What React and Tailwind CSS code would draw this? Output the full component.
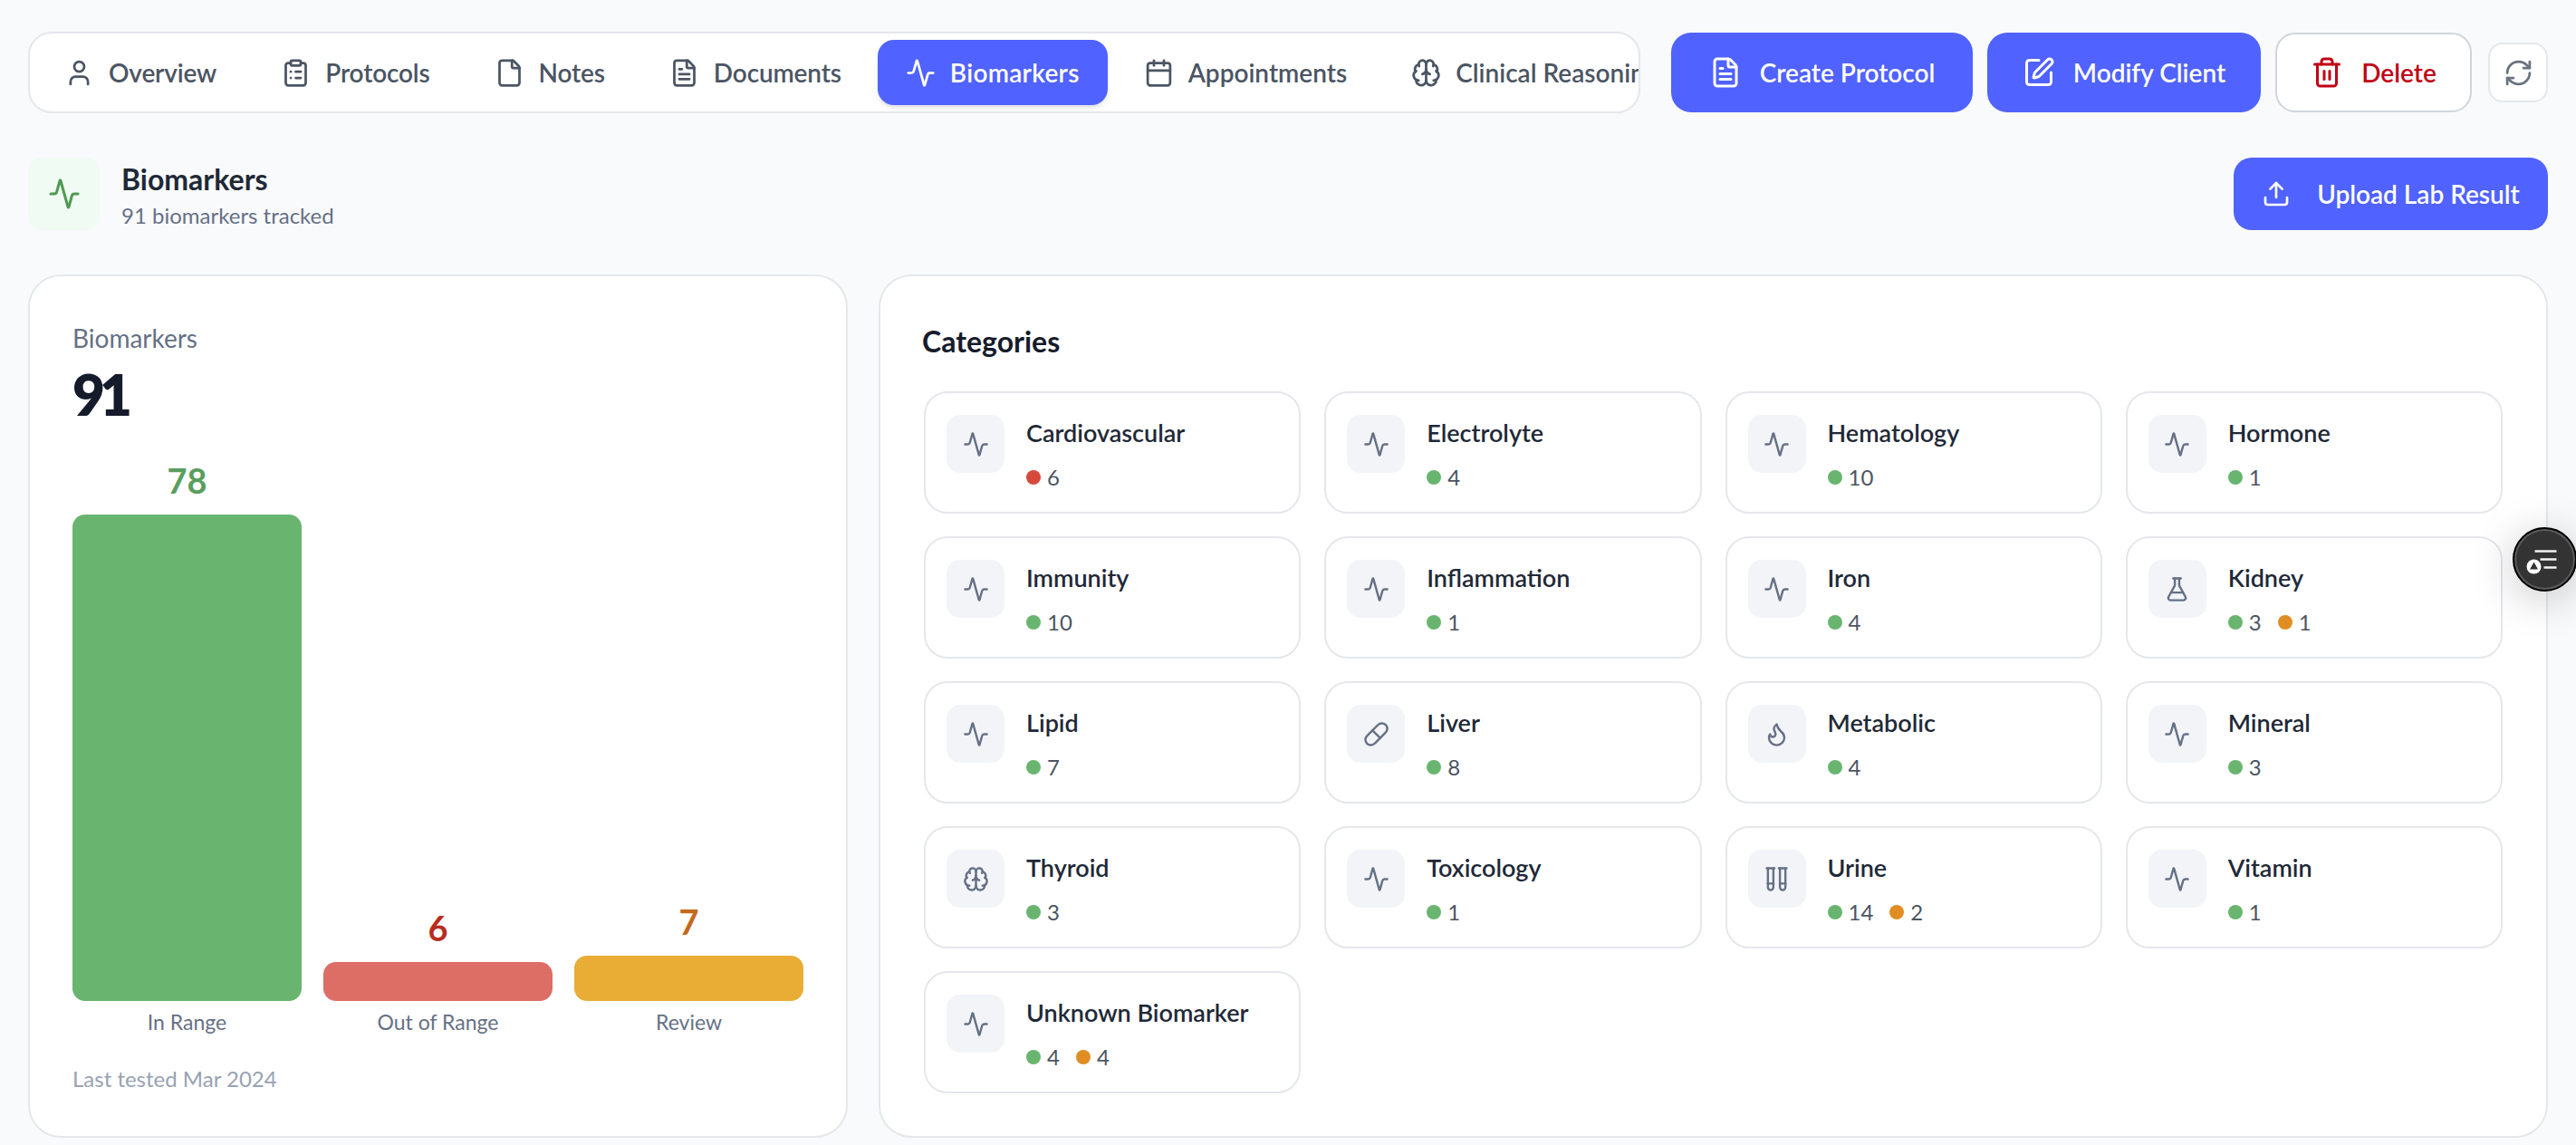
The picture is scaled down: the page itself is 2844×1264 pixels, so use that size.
import {
  Activity,
  Brain,
  Calendar,
  ClipboardList,
  File,
  FileText,
  Flame,
  FlaskConical,
  Pill,
  RefreshCw,
  SquarePen,
  TestTubes,
  Trash2,
  Upload,
  User,
} from "lucide-react";

const tabs = [
  { label: "Overview", icon: User, track: "tracking-[-0.15px]" },
  { label: "Protocols", icon: ClipboardList, track: "tracking-[-0.15px]" },
  { label: "Notes", icon: File, track: "tracking-[-0.15px]" },
  { label: "Documents", icon: FileText, track: "tracking-[-0.15px]" },
  { label: "Biomarkers", icon: Activity, active: true, track: "tracking-[0.3px]" },
  { label: "Appointments", icon: Calendar, track: "" },
  { label: "Clinical Reasoning", icon: Brain, track: "" },
];

const bars = [
  { label: "In Range", value: 78, text: "text-[#5a9e5e]", bar: "bg-[#69b570] h-[537px]" },
  { label: "Out of Range", value: 6, text: "text-[#b92d20]", bar: "bg-[#dc6e66] h-[43px]" },
  { label: "Review", value: 7, text: "text-[#c4691c]", bar: "bg-[#e9ad36] h-[50px]" },
];

const categories = [
  { name: "Cardiovascular", red: 6 },
  { name: "Electrolyte", green: 4 },
  { name: "Hematology", green: 10 },
  { name: "Hormone", green: 1 },
  { name: "Immunity", green: 10 },
  { name: "Inflammation", green: 1 },
  { name: "Iron", green: 4 },
  { name: "Kidney", icon: FlaskConical, green: 3, orange: 1 },
  { name: "Lipid", green: 7 },
  { name: "Liver", icon: Pill, green: 8 },
  { name: "Metabolic", icon: Flame, green: 4 },
  { name: "Mineral", green: 3 },
  { name: "Thyroid", icon: Brain, green: 3 },
  { name: "Toxicology", green: 1 },
  { name: "Urine", icon: TestTubes, green: 14, orange: 2 },
  { name: "Vitamin", green: 1 },
  { name: "Unknown Biomarker", green: 4, orange: 4 },
];

const Count = ({ color, value }) => (
  <span className="flex items-center gap-[7px]">
    <span className={`w-4 h-4 rounded-full ${color}`} />
    <span className="text-[24px] leading-none text-[#4b5563]">{value}</span>
  </span>
);

const CategoryCard = ({ name, icon: Icon = Activity, green, red, orange }) => (
  <div className="h-[135px] bg-white border-2 border-[#e5e7eb] rounded-[26px] pl-[23px] pt-[24px] flex gap-[24px]">
    <div className="w-[64px] h-[64px] bg-[#f3f4f8] rounded-[15px] flex items-center justify-center shrink-0">
      <Icon size={29} strokeWidth={2} className="text-[#667085]" />
    </div>
    <div className="flex flex-col mt-[1px]">
      <div className="text-[27px] leading-[38px] font-semibold text-[#1f2937]">{name}</div>
      <div className="flex items-center gap-[18px] mt-[18px]">
        {red !== undefined && <Count color="bg-[#d64a3c]" value={red} />}
        {green !== undefined && <Count color="bg-[#69b570]" value={green} />}
        {orange !== undefined && <Count color="bg-[#e08e24]" value={orange} />}
      </div>
    </div>
  </div>
);

export default function App() {
  return (
    <div className="relative w-full h-screen overflow-hidden bg-[#f9fafb] px-[31px] pt-[35px] font-['Lato',sans-serif]">
      {/* top bar */}
      <div className="flex items-center">
        <div className="w-[1780px] h-[90px] shrink-0 bg-white border-2 border-[#e5e7eb] rounded-[26px] overflow-hidden flex items-center gap-[9px] pl-[7px]">
          {tabs.map(({ label, icon: Icon, active, track }) => (
            <div
              key={label}
              className={
                active
                  ? "h-[72px] shrink-0 flex items-center gap-[16px] px-[31px] rounded-[18px] bg-[#5062ff] text-white shadow-md"
                  : "h-[72px] shrink-0 flex items-center gap-[16px] px-[31px] rounded-[18px] text-[#4b5563]"
              }
            >
              <Icon size={33} strokeWidth={2} />
              <span className={`text-[28px] font-semibold whitespace-nowrap ${track}`}>{label}</span>
            </div>
          ))}
        </div>
        <button className="ml-[34px] w-[333px] h-[88px] shrink-0 flex items-center justify-center gap-[20px] rounded-[22px] bg-[#5062ff] text-white text-[28px] font-semibold">
          <FileText size={36} strokeWidth={2} />
          Create Protocol
        </button>
        <button className="ml-[16px] w-[302px] h-[88px] shrink-0 flex items-center justify-center gap-[20px] rounded-[22px] bg-[#5062ff] text-white text-[28px] font-semibold">
          <SquarePen size={36} strokeWidth={2} />
          Modify Client
        </button>
        <button className="ml-[16px] w-[217px] h-[88px] shrink-0 flex items-center justify-center gap-[20px] rounded-[22px] bg-white border-2 border-[#d1d5db] text-[#c10015] text-[28px] font-semibold">
          <Trash2 size={36} strokeWidth={2} />
          Delete
        </button>
        <button className="ml-[18px] w-[66px] h-[66px] shrink-0 flex items-center justify-center rounded-[16px] bg-white border-2 border-[#e5e7eb] text-[#6b7280]">
          <RefreshCw size={33} strokeWidth={2} />
        </button>
      </div>

      {/* section header */}
      <div className="mt-[49px] h-[80px] flex items-center justify-between">
        <div className="flex items-center gap-[24px]">
          <div className="w-[79px] h-[80px] rounded-[15px] bg-[#f0fbf3] flex items-center justify-center">
            <Activity size={36} strokeWidth={2} className="text-[#4e9a52]" />
          </div>
          <div className="pt-[4px]">
            <div className="text-[32px] leading-[40px] font-bold text-[#1f2937]">Biomarkers</div>
            <div className="text-[24px] leading-[32px] mt-[4px] text-[#667085]">91 biomarkers tracked</div>
          </div>
        </div>
        <button className="w-[347px] h-[80px] flex items-center justify-center gap-[29px] rounded-[20px] bg-[#5062ff] text-white text-[28px] font-semibold">
          <Upload size={32} strokeWidth={2} />
          Upload Lab Result
        </button>
      </div>

      <div className="mt-[49px] flex gap-[34px] h-[953px]">
        {/* bar summary */}
        <div className="w-[905px] shrink-0 bg-white border-2 border-[#e5e7eb] rounded-[36px] px-[47px] pt-[48px] flex flex-col">
          <div className="text-[28px] leading-[40px] text-[#667085]">Biomarkers</div>
          <div className="text-[62px] leading-[76px] font-extrabold tracking-[-6px] text-[#161b2b] mt-[4px]">91</div>
          <div className="h-[557px] mt-[75px] flex items-end gap-[24px]">
            {bars.map((b) => (
              <div key={b.label} className="flex-1 flex flex-col items-center">
                <div className={`text-[38px] leading-[48px] font-bold mb-[14px] ${b.text}`}>{b.value}</div>
                <div className={`w-full rounded-[14px] ${b.bar}`} />
              </div>
            ))}
          </div>
          <div className="flex gap-[24px] mt-[7px]">
            {bars.map((b) => (
              <div key={b.label} className="flex-1 text-center text-[23px] leading-[32px] text-[#667085]">
                {b.label}
              </div>
            ))}
          </div>
          <div className="mt-[31px] text-[24px] leading-[32px] text-[#98a2b3]">Last tested Mar 2024</div>
        </div>

        {/* categories */}
        <div className="flex-1 bg-white border-2 border-[#e5e7eb] rounded-[36px] px-[48px] pt-[52px]">
          <h2 className="-ml-[2px] text-[32px] leading-[40px] font-bold text-[#161b2b]">Categories</h2>
          <div className="mt-[35px] grid grid-cols-4 gap-x-[26px] gap-y-[25px]">
            {categories.map((c) => (
              <CategoryCard key={c.name} {...c} />
            ))}
          </div>
        </div>
      </div>

      {/* floating widget */}
      <div className="absolute left-[2774px] top-[582px] w-[71px] h-[71px] rounded-full bg-[#333333] border-[2px] border-black ring-2 ring-inset ring-[#5b5b5b] shadow-[0_8px_48px_rgba(0,0,0,0.22)] flex items-center justify-center">
        <svg width="52" height="40" viewBox="0 0 52 40" fill="none">
          <path d="M14.5 10.5h24M20.5 19.5h18M24.5 28.5h14" stroke="#f3f3f3" strokeWidth="2.5" />
          <circle cx="13.5" cy="27.5" r="8" fill="#fff" />
          <path d="M13.5 22.5l4.5 8h-9z" fill="#333" />
        </svg>
      </div>
    </div>
  );
}
